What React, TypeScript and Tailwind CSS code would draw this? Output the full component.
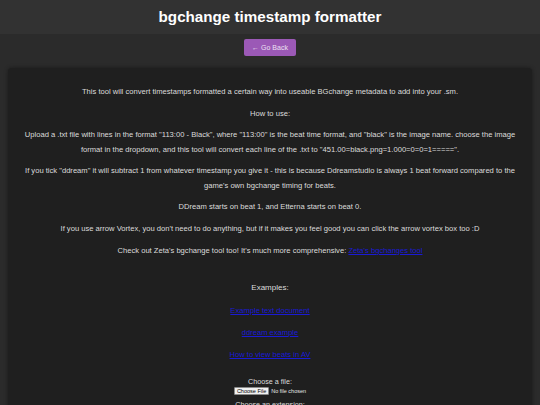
import React from 'react'

const links = ['Example text document', 'ddream example', 'How to view beats in AV']

export default function App() {
  return (
    <div className="min-h-[405px] bg-[#2b2b2b] text-[#dcdcdc] font-['Liberation_Sans',Arial,sans-serif]">
      {/* Header */}
      <header className="h-[34px] bg-[#323232] flex items-center justify-center">
        <h1 className="text-[15.2px] font-bold text-white leading-none">bgchange timestamp formatter</h1>
      </header>

      <div className="flex justify-center pt-[5px]">
        <button className="w-[52px] h-[17px] rounded-[2px] bg-[#9b59b6] text-[#ece0f2] text-[7px] leading-none flex items-center justify-center">
          ← Go Back
        </button>
      </div>

      {/* Main card */}
      <main className="mx-2 mt-[12px] rounded-[4px] bg-[#1f1f1f] shadow-[0_0_4px_rgba(0,0,0,0.4)] px-4 pt-[17px] pb-2 text-center text-[7.6px] leading-[14.5px]">
        <p className="mb-[7px]">
          This tool will convert timestamps formatted a certain way into useable BGchange metadata to add into your .sm.
        </p>
        <p className="mb-[7px]">How to use:</p>
        <p className="mb-[7px]">
          Upload a .txt file with lines in the format "113:00 - Black", where "113:00" is the beat time format, and "black" is the image name. choose the image format in the dropdown, and this tool will convert each line of the .txt to "451.00=black.png=1.000=0=0=1=====".
        </p>
        <p className="mb-[7px]">
          If you tick "ddream" it will subtract 1 from whatever timestamp you give it - this is because Ddreamstudio is always 1 beat forward compared to the game's own bgchange timing for beats.
        </p>
        <p className="mb-[7.5px]">DDream starts on beat 1, and Etterna starts on beat 0.</p>
        <p className="mb-[7.5px]">
          If you use arrow Vortex, you don't need to do anything, but if it makes you feel good you can click the arrow vortex box too :D
        </p>
        <p>
          Check out Zeta's bgchange tool too! It's much more comprehensive:{' '}
          <a href="#" className="text-[#1a1ad6] underline">Zeta's bgchanges tool</a>
        </p>

        <h3 className="mt-[22.5px] mb-[8.5px] text-[8px] leading-[14.5px]">Examples:</h3>
        {links.map((l, i) => (
          <p key={l} className={i < links.length - 1 ? 'mb-[7.5px]' : ''}>
            <a href="#" className="text-[#1a1ad6] underline">{l}</a>
          </p>
        ))}

        <div className="mt-[13px] flex flex-col items-center">
          <label className="text-[7.2px] leading-[11px]">Choose a file:</label>
          <div className="flex items-center gap-[2px]">
            <span className="h-[8px] px-[2px] bg-[#f0f0f0] border border-[#8a8a8a] rounded-[1px] text-black text-[5.5px] leading-[6px] flex items-center">
              Choose File
            </span>
            <span className="text-[5.5px] leading-[8px] text-[#e6e6e6]">No file chosen</span>
          </div>
          <label className="mt-[4px] text-[7.2px] leading-[11px]">Choose an extension:</label>
        </div>
      </main>
    </div>
  )
}
